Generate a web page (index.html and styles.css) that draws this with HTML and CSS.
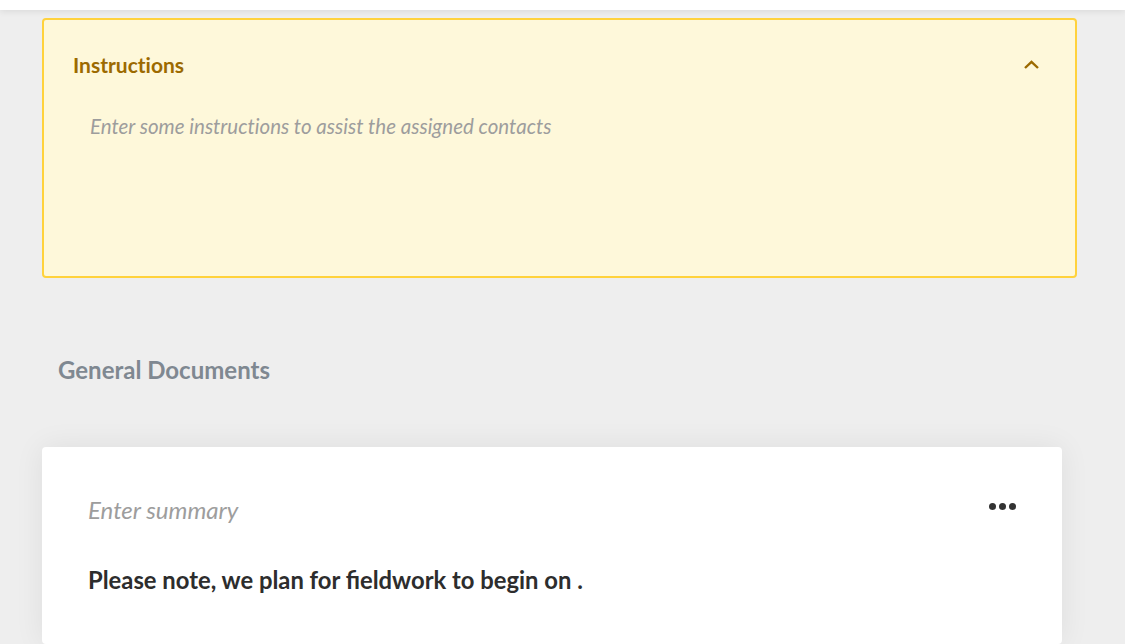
FILE: index.html
```html
<!DOCTYPE html>
<html>
<head>
<meta charset="utf-8">
<link rel="stylesheet" href="styles.css">
</head>
<body>
<div class="topbar"></div>
<main class="content">
  <section class="instructions">
    <div class="instr-head">
      <span class="instr-title">Instructions</span>
      <svg class="chev" width="17" height="11" viewBox="0 0 17 11"><path d="M2 9 L8.5 2.8 L15 9" fill="none" stroke="#9c6a00" stroke-width="2.4"/></svg>
    </div>
    <div class="instr-placeholder">Enter some instructions to assist the assigned contacts</div>
  </section>
  <h2 class="section-title">General Documents</h2>
  <section class="card">
    <div class="card-head">
      <span class="summary-placeholder">Enter summary</span>
      <span class="dots"><i></i><i></i><i></i></span>
    </div>
    <p class="note">Please note, we plan for fieldwork to begin on .</p>
  </section>
</main>
</body>
</html>
```
FILE: styles.css
```css
html, body { margin: 0; padding: 0; }
body {
  background: #eeeeee;
  font-family: Lato, "Open Sans", sans-serif;
  height: 644px;
  overflow: hidden;
}
.topbar {
  height: 10px;
  background: #ffffff;
  box-shadow: 0 2px 6px rgba(0,0,0,0.08);
  position: relative;
}
.content {
  padding: 8px 0 0 42px;
}
.instructions {
  width: 1031px;
  height: 256px;
  background: #fef8da;
  border: 2px solid #ffd23c;
  border-radius: 4px;
}
.instr-head {
  display: flex;
  align-items: center;
  justify-content: space-between;
  padding: 31px 35px 0 29px;
  height: 26px;
}
.instr-title {
  font-weight: 700;
  font-size: 21px;
  color: #9c6a00;
  font-variant-ligatures: no-common-ligatures;
}
.chev { display: block; margin-top: 0; }
.instr-placeholder {
  margin: 37px 0 0 46px;
  font-style: italic;
  font-size: 20.5px;
  color: #9d9d9d;
  font-variant-ligatures: no-common-ligatures;
}
.section-title {
  margin: 77px 0 0 16px;
  font-size: 24px;
  font-weight: 700;
  color: #7f8891;
  height: 30px;
  line-height: 30px;
}
.card {
  margin-top: 62px;
  width: 1020px;
  height: 197px;
  background: #ffffff;
  border-radius: 4px;
  box-shadow: 0 0 30px rgba(0,0,0,0.07);
}
.card-head {
  display: flex;
  align-items: center;
  justify-content: space-between;
  padding: 48px 46px 0 46px;
  height: 28px;
}
.summary-placeholder {
  font-style: italic;
  font-size: 24px;
  color: #9d9d9d;
}
.dots { display: flex; gap: 3px; margin-top: -5px; }
.dots i {
  width: 7px; height: 7px; border-radius: 50%;
  background: #333333; display: block;
}
.note {
  margin: 43px 0 0 46px;
  font-size: 23.8px;
  font-weight: 700;
  color: #2d2d2d;
}
```
